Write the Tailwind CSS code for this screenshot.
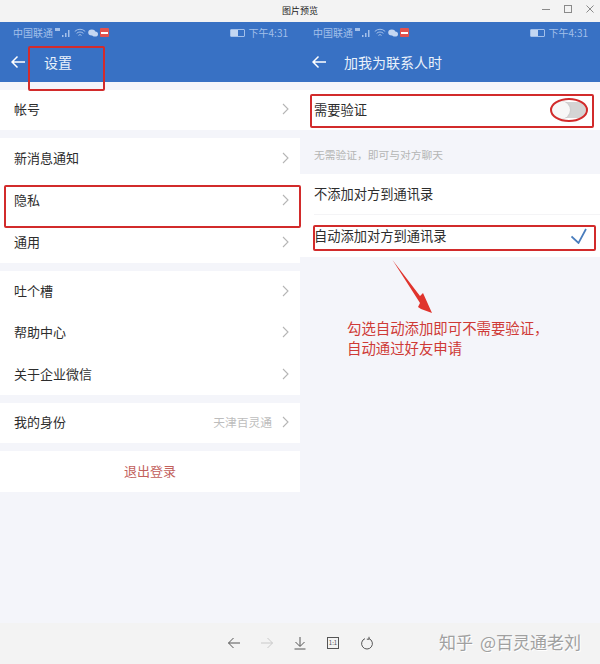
<!DOCTYPE html>
<html lang="zh-CN">
<head>
  <meta charset="UTF-8">
  <title>图片预览</title>
  <script src="https://cdn.jsdelivr.net/npm/@tailwindcss/browser@4"></script>
</head>
<body class="m-0 bg-[#f3f3f3]">
  <div class="relative w-[600px] h-[664px] overflow-hidden flex flex-col font-['Noto_Sans_CJK_SC','Liberation_Sans',sans-serif] text-[#2d2d2d]">

    <!-- window title bar -->
    <div class="relative h-[22px] flex items-center justify-center bg-[#f3f3f3] text-[9px] text-[#222]">
      图片预览
      <div class="absolute right-[5px] top-0 h-[18px] flex items-center gap-[12px] text-[#8a8a8a]">
        <svg width="10" height="10" viewBox="0 0 10 10" fill="none" stroke="currentColor"><path d="M1 5.5h8"/></svg>
        <svg width="10" height="10" viewBox="0 0 10 10" fill="none" stroke="currentColor"><rect x="1.5" y="1.5" width="7" height="7"/></svg>
        <svg width="10" height="10" viewBox="0 0 10 10" fill="none" stroke="currentColor"><path d="M1.5 1.5l7 7M8.5 1.5l-7 7"/></svg>
      </div>
    </div>

    <!-- two phone shots -->
    <div class="grid grid-cols-2 h-[601px] bg-[#f4f5fa]">

      <!-- left: settings -->
      <div class="flex flex-col">
        <div class="h-[60px] bg-[#3871c4] flex flex-col">
          <div class="h-[21px] pl-[13px] pr-[12px] flex items-center text-[10px] text-[#a3c0ea]">
            <span>中国联通</span>
            <svg class="ml-[2px]" width="17" height="10" viewBox="0 0 17 10" fill="#a3c0ea"><rect x="0" y="0" width="5" height="3"/><rect x="7" y="7" width="1.5" height="2"/><rect x="10" y="5" width="1.5" height="4"/><rect x="13" y="2" width="1.5" height="7"/></svg>
            <svg class="ml-[2px]" width="12" height="10" viewBox="0 0 12 10" fill="none" stroke="#a3c0ea"><path d="M.8 3.400a7.400 7.400 0 0 1 10.400 0M2.600 5.400a4.800 4.800 0 0 1 6.800 0M4.400 7.400a2.200 2.200 0 0 1 3.200 0"/></svg>
            <svg class="ml-[2px]" width="10" height="8" viewBox="0 0 10 8" fill="#c4d7f2"><ellipse cx="3.8" cy="3.4" rx="3.6" ry="3"/><ellipse cx="7" cy="5" rx="3" ry="2.6"/></svg>
            <span class="ml-[2px] w-[9px] h-[9px] rounded-[1px] bg-[#e2524e] flex items-center justify-center"><span class="w-[7px] h-[2px] bg-white"></span></span>
            <span class="ml-auto mr-[3px] w-[15px] h-[8px] border border-[#a3c0ea] rounded-[1px] bg-[linear-gradient(90deg,#c4d7f2_55%,transparent_55%)]"></span>
            <span class="ml-[1px]">下午4:31</span>
          </div>
          <div class="flex-1 flex items-center pl-[11px] text-[14px] text-[#eaf1fb] pb-[1px]">
            <svg width="14" height="14" viewBox="0 0 14 14" fill="none" stroke="#fff" stroke-width="1.5"><path d="M14 7H1M6.500 1.500L1 7l5.500 5.500"/></svg>
            <span class="ml-[19px]">设置</span>
          </div>
        </div>

        <div class="mt-[8px] h-[40px] bg-white flex items-center justify-between pl-[14px] pr-[11px] pb-[2px] text-[13px]">
          <span>帐号</span>
          <svg width="7" height="12" viewBox="0 0 7 12" fill="none" stroke="#b5b5b5" stroke-width="1.1"><path d="M1 1l5 5-5 5"/></svg>
        </div>

        <div class="mt-[8px] bg-white flex flex-col text-[13px]">
          <div class="h-[42px] flex items-center justify-between pl-[14px] pr-[11px] pb-[2px]">
            <span>新消息通知</span>
            <svg width="7" height="12" viewBox="0 0 7 12" fill="none" stroke="#b5b5b5" stroke-width="1.1"><path d="M1 1l5 5-5 5"/></svg>
          </div>
          <div class="h-[42px] flex items-center justify-between pl-[14px] pr-[11px] pb-[2px]">
            <span>隐私</span>
            <svg width="7" height="12" viewBox="0 0 7 12" fill="none" stroke="#b5b5b5" stroke-width="1.1"><path d="M1 1l5 5-5 5"/></svg>
          </div>
          <div class="h-[41px] flex items-center justify-between pl-[14px] pr-[11px] pb-[2px]">
            <span>通用</span>
            <svg width="7" height="12" viewBox="0 0 7 12" fill="none" stroke="#b5b5b5" stroke-width="1.1"><path d="M1 1l5 5-5 5"/></svg>
          </div>
        </div>

        <div class="mt-[8px] bg-white flex flex-col text-[13px]">
          <div class="h-[41px] flex items-center justify-between pl-[14px] pr-[11px] pb-[2px]">
            <span>吐个槽</span>
            <svg width="7" height="12" viewBox="0 0 7 12" fill="none" stroke="#b5b5b5" stroke-width="1.1"><path d="M1 1l5 5-5 5"/></svg>
          </div>
          <div class="h-[42px] flex items-center justify-between pl-[14px] pr-[11px] pb-[2px]">
            <span>帮助中心</span>
            <svg width="7" height="12" viewBox="0 0 7 12" fill="none" stroke="#b5b5b5" stroke-width="1.1"><path d="M1 1l5 5-5 5"/></svg>
          </div>
          <div class="h-[41px] flex items-center justify-between pl-[14px] pr-[11px] pb-[2px]">
            <span>关于企业微信</span>
            <svg width="7" height="12" viewBox="0 0 7 12" fill="none" stroke="#b5b5b5" stroke-width="1.1"><path d="M1 1l5 5-5 5"/></svg>
          </div>
        </div>

        <div class="mt-[8px] h-[40px] bg-white flex items-center pl-[14px] pr-[11px] pb-[2px] text-[13px]">
          <span>我的身份</span>
          <span class="ml-auto mr-[10px] text-[11.75px] text-[#bdbdbd]">天津百灵通</span>
          <svg width="7" height="12" viewBox="0 0 7 12" fill="none" stroke="#b5b5b5" stroke-width="1.1"><path d="M1 1l5 5-5 5"/></svg>
        </div>

        <div class="mt-[8px] h-[41px] bg-white flex items-center justify-center pb-[2px] text-[13px] text-[#c2605c]">退出登录</div>
      </div>

      <!-- right: add me as contact -->
      <div class="flex flex-col">
        <div class="h-[60px] bg-[#3871c4] flex flex-col">
          <div class="h-[21px] pl-[13px] pr-[12px] flex items-center text-[10px] text-[#a3c0ea]">
            <span>中国联通</span>
            <svg class="ml-[2px]" width="17" height="10" viewBox="0 0 17 10" fill="#a3c0ea"><rect x="0" y="0" width="5" height="3"/><rect x="7" y="7" width="1.5" height="2"/><rect x="10" y="5" width="1.5" height="4"/><rect x="13" y="2" width="1.5" height="7"/></svg>
            <svg class="ml-[2px]" width="12" height="10" viewBox="0 0 12 10" fill="none" stroke="#a3c0ea"><path d="M.8 3.400a7.400 7.400 0 0 1 10.400 0M2.600 5.400a4.800 4.800 0 0 1 6.800 0M4.400 7.400a2.200 2.200 0 0 1 3.200 0"/></svg>
            <svg class="ml-[2px]" width="10" height="8" viewBox="0 0 10 8" fill="#c4d7f2"><ellipse cx="3.8" cy="3.4" rx="3.6" ry="3"/><ellipse cx="7" cy="5" rx="3" ry="2.6"/></svg>
            <span class="ml-[2px] w-[9px] h-[9px] rounded-[1px] bg-[#e2524e] flex items-center justify-center"><span class="w-[7px] h-[2px] bg-white"></span></span>
            <span class="ml-auto mr-[3px] w-[15px] h-[8px] border border-[#a3c0ea] rounded-[1px] bg-[linear-gradient(90deg,#c4d7f2_55%,transparent_55%)]"></span>
            <span class="ml-[1px]">下午4:31</span>
          </div>
          <div class="flex-1 flex items-center pl-[12px] text-[14px] text-[#eaf1fb] pb-[1px]">
            <svg width="14" height="14" viewBox="0 0 14 14" fill="none" stroke="#fff" stroke-width="1.5"><path d="M14 7H1M6.500 1.500L1 7l5.500 5.500"/></svg>
            <span class="ml-[18px]">加我为联系人时</span>
          </div>
        </div>

        <div class="mt-[8px] h-[40px] bg-white flex items-center justify-between pl-[14px] pr-[14px] text-[13.25px]">
          <span>需要验证</span>
          <span class="w-[34px] h-[16px] rounded-full bg-[#d4d4d4] flex items-center">
            <span class="w-[18px] h-[18px] rounded-full bg-[#f7f7f7] shadow-[0_0_2px_#bbb]"></span>
          </span>
        </div>

        <div class="h-[44px] pl-[14px] pt-[16px] text-[10.75px] leading-[18px] text-[#b5b5b5]">无需验证，即可与对方聊天</div>

        <div class="bg-white flex flex-col text-[13.25px]">
          <div class="h-[41px] ml-[14px] flex items-center border-b border-[#f4f4f6]">不添加对方到通讯录</div>
          <div class="h-[42px] pl-[14px] pr-[13px] flex items-center justify-between">
            <span>自动添加对方到通讯录</span>
            <svg width="16" height="16" viewBox="0 0 16 16" fill="none" stroke="#4a7dbd" stroke-width="1.75"><path d="M.5 8.500l7 6.500L15 1"/></svg>
          </div>
        </div>

        <div class="mt-[61px] ml-[47px] text-[14.4px] leading-[20px] text-[#cf3a36]">
          <div>勾选自动添加即可不需要验证，</div>
          <div>自动通过好友申请</div>
        </div>
      </div>
    </div>

    <!-- viewer toolbar -->
    <div class="relative flex-1 bg-[#f3f3f3] flex items-center pl-[227px] pb-[1px] gap-[19px] text-[#555]">
      <svg width="14" height="14" viewBox="0 0 14 14" fill="none" stroke="#555"><path d="M13 7H1.500M6.500 2L1.500 7l5 5"/></svg>
      <svg width="14" height="14" viewBox="0 0 14 14" fill="none" stroke="#c9c9c9"><path d="M1 7h11.500M7.500 2l5 5-5 5"/></svg>
      <svg width="14" height="14" viewBox="0 0 14 14" fill="none" stroke="#555"><path d="M7 1v9M2.500 6L7 10.500 11.500 6M1.500 13h11"/></svg>
      <span class="w-[12px] h-[12px] mx-[1px] border border-[#555] text-[6px] leading-[10px] text-center">1:1</span>
      <svg class="ml-[1px]" width="14" height="14" viewBox="0 0 14 14" fill="none" stroke="#555"><path d="M5 2.600a5.400 5.400 0 1 0 4 0M9 .8v2.400H6.800"/></svg>
      <div class="absolute left-[439px] top-[7px] flex items-center gap-[7px] text-[17px] leading-[24px] text-[#a0a0a0] [text-shadow:1px_1px_0_#fff] whitespace-nowrap">
        <span>知乎</span>
        <span>@百灵通老刘</span>
      </div>
    </div>

    <!-- red annotations over the screenshots -->
    <div class="absolute left-[28px] top-[46px] w-[77px] h-[45px] border-2 border-[#d22b2b] rounded-[2px]"></div>
    <div class="absolute left-[4px] top-[185px] w-[297px] h-[43px] border-2 border-[#d22b2b] rounded-[2px]"></div>
    <div class="absolute left-[310px] top-[94px] w-[284px] h-[34px] border-2 border-[#d22b2b] rounded-[2px]"></div>
    <div class="absolute left-[550px] top-[98px] w-[38px] h-[24px] border-2 border-[#d22b2b] rounded-[50%]"></div>
    <div class="absolute left-[313px] top-[225px] w-[283px] h-[26px] border-2 border-[#d22b2b] rounded-[2px]"></div>
    <svg class="absolute left-[390px] top-[258px]" width="46" height="58" viewBox="0 0 46 58" fill="#e0342d"><path d="M2.500 2 L30 38 L33 35 L42 55 L31 51 L28 49 L30 45 Z"/></svg>
  </div>
</body>
</html>
